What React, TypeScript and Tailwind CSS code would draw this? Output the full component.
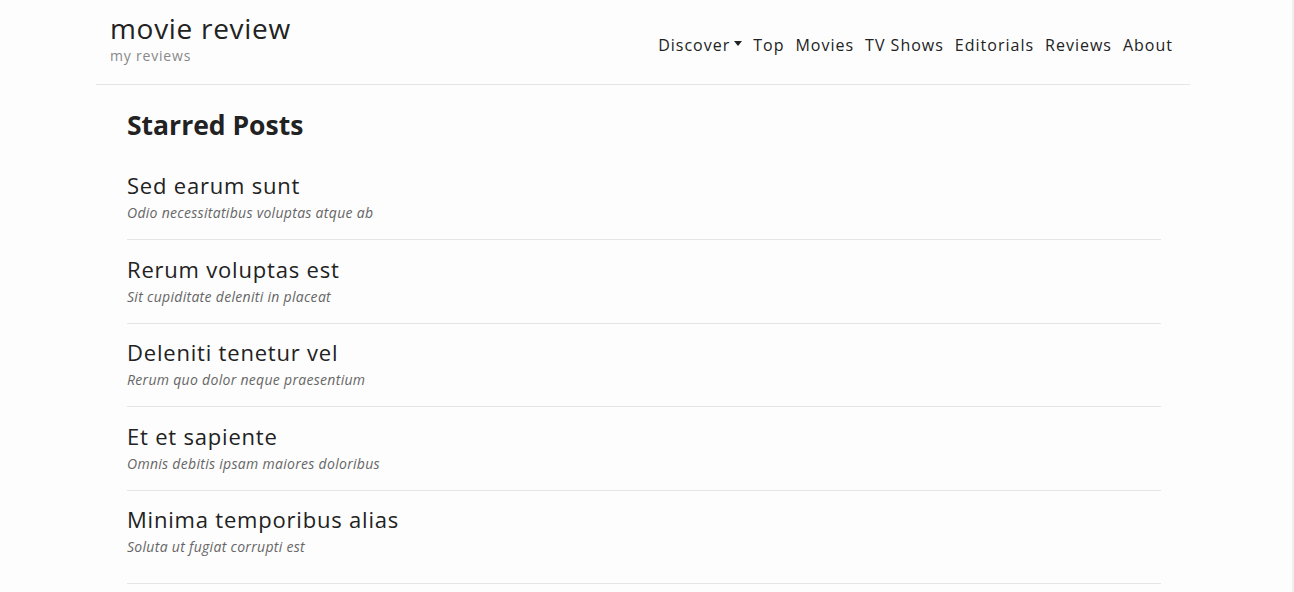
import React from 'react';

const posts = [
  { title: 'Sed earum sunt', sub: 'Odio necessitatibus voluptas atque ab' },
  { title: 'Rerum voluptas est', sub: 'Sit cupiditate deleniti in placeat' },
  { title: 'Deleniti tenetur vel', sub: 'Rerum quo dolor neque praesentium' },
  { title: 'Et et sapiente', sub: 'Omnis debitis ipsam maiores doloribus' },
  { title: 'Minima temporibus alias', sub: 'Soluta ut fugiat corrupti est' },
];

const links = ['Top', 'Movies', 'TV Shows', 'Editorials', 'Reviews', 'About'];

const App: React.FC = () => {
  return (
    <div
      className="min-h-[592px] w-full bg-[#fdfdfd] border-r-2 border-[#f0f0f0] text-[#222]"
      style={{ fontFamily: '"Open Sans", "Liberation Sans", sans-serif' }}
    >
      <div className="w-[1094px] ml-[96px]">
        <header className="flex items-start justify-between border-b border-[#e6e6e6] h-[85px]">
          <div className="pl-[14px] pt-[10px]">
            <h1 className="text-[28px] leading-[36px] tracking-[0.7px] text-[#222]">movie review</h1>
            <p className="text-[14px] leading-[20px] tracking-[0.8px] text-[#888]">my reviews</p>
          </div>
          <nav className="flex items-center gap-[11px] pr-[17px] pt-[33px] text-[16px] leading-[24px] tracking-[1px]">
            <span className="flex items-center gap-[4px]">
              Discover
              <span className="inline-block w-0 h-0 border-l-[4px] border-r-[4px] border-t-[5px] border-l-transparent border-r-transparent border-t-[#222] mb-[3px]" />
            </span>
            {links.map((l) => (
              <span key={l}>{l}</span>
            ))}
          </nav>
        </header>

        <main className="pl-[31px] pr-[29px]">
          <h2 className="text-[26.5px] leading-[36px] font-bold pt-[22px] pb-[27px]">Starred Posts</h2>
          {posts.map((p, i) => (
            <div
              key={p.title}
              className={`border-b border-[#e6e6e6] mb-[13.5px] ${i === posts.length - 1 ? 'pb-[24.5px]' : 'pb-[15px]'}`}
            >
              <h3 className="text-[22px] leading-[30px] tracking-[0.8px] text-[#222]">{p.title}</h3>
              <p className="mt-[2px] text-[14px] leading-[22px] italic tracking-[0.3px] text-[#666]">{p.sub}</p>
            </div>
          ))}
        </main>
      </div>
    </div>
  );
};

export default App;
